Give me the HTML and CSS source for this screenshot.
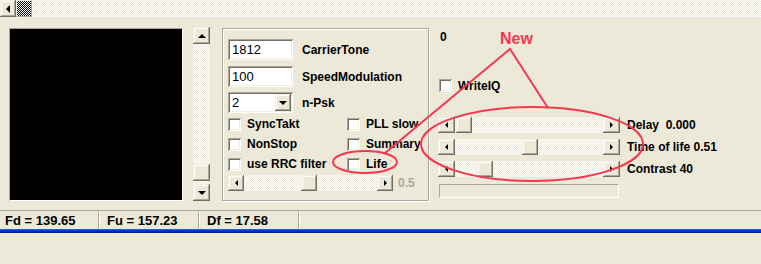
FILE: index.html
```html
<!DOCTYPE html>
<html lang="en">
<head>
    <meta charset="UTF-8">
    <title>PSK Modem</title>
    <link rel="stylesheet" href="styles.css">
</head>
<body>

    <!-- Top horizontal scroll bar -->
    <div class="hscroll top-scroll">
        <div class="sb-btn"><span class="arr arr-left"></span></div>
        <div class="dither-thumb"></div>
        <div class="track"></div>
    </div>

    <!-- Main panel -->
    <div class="main">
        <div class="screen"></div>

        <div class="vscroll">
            <div class="sb-btn"><span class="arr arr-up"></span></div>
            <div class="track grow"></div>
            <div class="sb-btn thumb-v"></div>
            <div class="track gap"></div>
            <div class="sb-btn"><span class="arr arr-down"></span></div>
        </div>

        <div class="group">
            <div class="field-row">
                <div class="edit">1812</div>
                <span class="label">CarrierTone</span>
            </div>
            <div class="field-row">
                <div class="edit">100</div>
                <span class="label">SpeedModulation</span>
            </div>
            <div class="field-row">
                <div class="edit combo">
                    <span class="combo-value">2</span>
                    <div class="sb-btn combo-btn"><span class="arr arr-down"></span></div>
                </div>
                <span class="label">n-Psk</span>
            </div>

            <div class="checks">
                <label class="check"><span class="box"></span>SyncTakt</label>
                <label class="check"><span class="box"></span>PLL slow</label>
                <label class="check"><span class="box"></span>NonStop</label>
                <label class="check"><span class="box"></span>Summary</label>
                <label class="check"><span class="box"></span>use RRC filter</label>
                <label class="check"><span class="box"></span>Life</label>
            </div>

            <div class="slider-row">
                <div class="hscroll small-scroll">
                    <div class="sb-btn"><span class="arr arr-left small"></span></div>
                    <div class="track grow">
                        <div class="sb-btn thumb-h" style="margin-left: 57px;"></div>
                    </div>
                    <div class="sb-btn"><span class="arr arr-right small"></span></div>
                </div>
                <span class="label disabled">0.5</span>
            </div>
        </div>

        <div class="side">
            <div class="side-value">0</div>
            <label class="check write-iq"><span class="box"></span>WriteIQ</label>

            <div class="param-row">
                <div class="hscroll param-scroll">
                    <div class="sb-btn wide"><span class="arr arr-left small"></span></div>
                    <div class="track grow">
                        <div class="sb-btn thumb-h" style="margin-left: 1px;"></div>
                    </div>
                    <div class="sb-btn wide"><span class="arr arr-right small"></span></div>
                </div>
                <span class="label">Delay&nbsp; 0.000</span>
            </div>
            <div class="param-row">
                <div class="hscroll param-scroll">
                    <div class="sb-btn wide"><span class="arr arr-left small"></span></div>
                    <div class="track grow">
                        <div class="sb-btn thumb-h" style="margin-left: 67px;"></div>
                    </div>
                    <div class="sb-btn wide"><span class="arr arr-right small"></span></div>
                </div>
                <span class="label">Time of life 0.51</span>
            </div>
            <div class="param-row">
                <div class="hscroll param-scroll">
                    <div class="sb-btn wide"><span class="arr arr-left small"></span></div>
                    <div class="track grow">
                        <div class="sb-btn thumb-h" style="margin-left: 22px;"></div>
                    </div>
                    <div class="sb-btn wide"><span class="arr arr-right small"></span></div>
                </div>
                <span class="label">Contrast 40</span>
            </div>

            <div class="empty-box"></div>
        </div>
    </div>

    <!-- Status bar -->
    <div class="statusbar">
        <div class="panel">Fd = 139.65</div>
        <div class="panel">Fu = 157.23</div>
        <div class="panel">Df = 17.58</div>
        <div class="panel last"></div>
    </div>
    <div class="blue-line"></div>

    <!-- Red hand-drawn notes on top -->
    <svg class="notes" width="761" height="264" viewBox="0 0 761 264">
        <text x="500" y="44" class="note-text">New</text>
        <polyline points="385,153 510,49 548,108" fill="none" stroke="#f5384f" stroke-width="2"/>
        <ellipse cx="365" cy="162" rx="32" ry="11" fill="none" stroke="#f5384f" stroke-width="2"/>
        <ellipse cx="532" cy="144" rx="111" ry="37" fill="none" stroke="#f5384f" stroke-width="2"/>
    </svg>

</body>
</html>
```

FILE: styles.css
```css
/* Global */
body {
    margin: 0;
    width: 761px;
    height: 264px;
    overflow: hidden;
    background-color: #ece9d8;
    font-family: "Liberation Sans", Arial, sans-serif;
    font-size: 12px;
    font-weight: bold;
    color: #000;
    position: relative;
}

/* Scroll bar parts */
.hscroll {
    display: flex;
    height: 16px;
}

.track {
    background-color: #fff;
    background-image: repeating-conic-gradient(#ece9d8 0 25%, #fff 0 50%);
    background-size: 2px 2px;
}

.track.grow {
    flex-grow: 1;
    display: flex;
}

.sb-btn {
    width: 16px;
    height: 16px;
    flex-shrink: 0;
    box-sizing: border-box;
    background-color: #ece9d8;
    box-shadow: inset -1px -1px #716f64, inset 1px 1px #f1efe2,
                inset -2px -2px #aca899, inset 2px 2px #fff;
    display: flex;
    align-items: center;
    justify-content: center;
}

.sb-btn.wide {
    width: 17px;
}

.arr {
    width: 0;
    height: 0;
    border: 4px solid transparent;
}

.arr-left {
    border-right-color: #000;
    border-left-width: 0;
}

.arr-right {
    border-left-color: #000;
    border-right-width: 0;
}

.arr-up {
    border-bottom-color: #000;
    border-top-width: 0;
}

.arr-down {
    border-top-color: #000;
    border-bottom-width: 0;
}

.arr.small {
    border-width: 3px;
}

.arr-left.small {
    border-left-width: 0;
}

.arr-right.small {
    border-right-width: 0;
}

/* Top bar */
.top-scroll {
    height: 17px;
}

.top-scroll .sb-btn {
    height: 17px;
}

.top-scroll .track {
    flex-grow: 1;
}

.dither-thumb {
    width: 16px;
    height: 17px;
    box-sizing: border-box;
    border: 1px solid #ece9d8;
    border-right-color: #aca899;
    border-bottom-color: #aca899;
    background-image: repeating-conic-gradient(#000 0 25%, #fff 0 50%);
    background-size: 2px 2px;
}

/* Main area */
.main {
    display: flex;
    align-items: flex-start;
    margin-top: 11px;
    padding-left: 9px;
}

.screen {
    width: 174px;
    height: 173px;
    box-sizing: border-box;
    background-color: #000;
    border: 1px solid;
    border-color: #aca899 #fff #fff #aca899;
}

.vscroll {
    display: flex;
    flex-direction: column;
    width: 17px;
    height: 174px;
    margin-left: 10px;
    margin-top: -1px;
}

.vscroll .sb-btn {
    width: 17px;
    height: 17px;
}

.vscroll .track.grow {
    flex-grow: 1;
}

.vscroll .track.gap {
    height: 3px;
}

/* Group box */
.group {
    width: 207px;
    height: 173px;
    box-sizing: border-box;
    margin-left: 12px;
    padding: 10px 0 0 5px;
    border: 1px solid #aca899;
    box-shadow: inset 1px 1px #fff, 1px 1px #fff;
}

.field-row {
    display: flex;
    align-items: center;
    margin-bottom: 5px;
}

.field-row:first-child {
    margin-bottom: 6px;
}

.field-row:nth-child(3) {
    margin-bottom: 0;
}

.edit {
    width: 65px;
    height: 21px;
    box-sizing: border-box;
    padding: 2px 0 0 4px;
    background-color: #fff;
    box-shadow: inset 1px 1px #aca899, inset -1px -1px #fff,
                inset 2px 2px #716f64, inset -2px -2px #f1efe2;
    font-size: 13px;
    font-weight: normal;
    line-height: 17px;
}

.label {
    margin-left: 9px;
    white-space: nowrap;
}

.combo {
    display: flex;
    justify-content: space-between;
    padding: 2px 2px 2px 4px;
}

.combo-btn {
    height: 17px;
}

/* Checkboxes */
.checks {
    display: grid;
    grid-template-columns: 119px auto;
    grid-auto-rows: 20px;
    margin-top: 1px;
}

.check {
    display: flex;
    align-items: center;
    white-space: nowrap;
}

.box {
    width: 13px;
    height: 13px;
    margin-right: 6px;
    flex-shrink: 0;
    background-color: #fff;
    box-shadow: inset 1px 1px #aca899, inset -1px -1px #fff,
                inset 2px 2px #716f64, inset -2px -2px #f1efe2;
}

.slider-row {
    display: flex;
    align-items: center;
    margin-top: 1px;
}

.small-scroll {
    width: 165px;
}

.thumb-h {
    height: 16px;
}

.label.disabled {
    margin-left: 5px;
    color: #aca899;
}

/* Right side */
.side {
    margin-left: 9px;
    display: flex;
    flex-direction: column;
}

.side-value {
    margin-top: 2px;
    margin-left: 2px;
    line-height: 14px;
}

.write-iq {
    margin-top: 35px;
    margin-left: 1px;
    height: 13px;
}

.param-row {
    display: flex;
    align-items: center;
    margin-top: 6px;
}

.write-iq + .param-row {
    margin-top: 25px;
}

.param-scroll {
    width: 182px;
}

.param-row .label {
    margin-left: 7px;
}

.empty-box {
    width: 180px;
    height: 14px;
    margin: 7px 0 0 1px;
    box-sizing: border-box;
    border: 1px solid;
    border-color: #aca899 #fff #fff #aca899;
}

/* Status bar */
.statusbar {
    display: flex;
    margin-top: 9px;
    border-top: 1px solid #aca899;
    height: 18px;
    font-size: 13px;
}

.panel {
    width: 100px;
    box-sizing: border-box;
    padding-left: 7px;
    line-height: 19px;
    border-right: 1px solid #fff;
    box-shadow: inset -1px 0 #aca899;
}

.panel:first-child {
    padding-left: 5px;
}

.panel.last {
    flex-grow: 1;
    border-right: none;
    box-shadow: none;
}

.blue-line {
    height: 4px;
    background: linear-gradient(#2a6ef0, #0038cc 40%, #001888);
}

/* Notes overlay */
.notes {
    position: absolute;
    top: 0;
    left: 0;
    pointer-events: none;
}

.note-text {
    fill: #f5384f;
    font-family: "Liberation Sans", Arial, sans-serif;
    font-size: 16px;
    font-weight: bold;
}
```
